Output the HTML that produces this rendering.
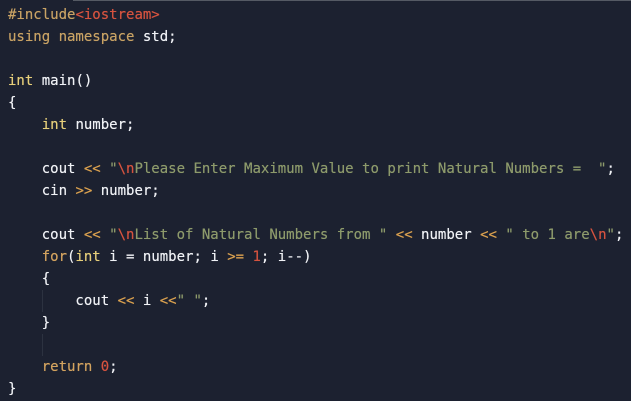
<!DOCTYPE html>
<html><head><meta charset="utf-8"><style>
html,body{margin:0;padding:0;background:#1c2130;width:631px;height:401px;overflow:hidden}
.top{position:absolute;left:73px;top:0;right:0;height:1px;background:#555a64}
pre{position:absolute;left:8px;top:4px;margin:0;font-family:"DejaVu Sans Mono","Liberation Mono",monospace;font-size:14px;line-height:22px;color:#f0f2f6;text-shadow:0 0 0.4px currentColor}
.k{color:#d3a35f}.y{color:#e6cf7a}.r{color:#d5533f}.s{color:#8d9a6b}.o{color:#d9a04f}.p{color:#c8a264}
.g{position:absolute;width:1px;background:#2c3240}
</style></head><body>
<div class="top"></div>
<div class="g" style="left:42px;top:290px;height:22px"></div>
<div class="g" style="left:42px;top:334px;height:22px"></div>
<pre><span class="p">#include</span><span class="r">&lt;iostream&gt;</span>
<span class="p">using namespace</span> std;

<span class="y">int</span> main()
{
    <span class="y">int</span> number;

    cout <span class="o">&lt;&lt;</span> <span class="s">"<span class="r">\n</span>Please Enter Maximum Value to print Natural Numbers =  "</span>;
    cin <span class="o">&gt;&gt;</span> number;

    cout <span class="o">&lt;&lt;</span> <span class="s">"<span class="r">\n</span>List of Natural Numbers from "</span> <span class="o">&lt;&lt;</span> number <span class="o">&lt;&lt;</span> <span class="s">" to 1 are<span class="r">\n</span>"</span>;
    <span class="k">for</span>(<span class="y">int</span> i = number; i <span class="o">&gt;=</span> <span class="r">1</span>; i--)
    {
        cout <span class="o">&lt;&lt;</span> i <span class="o">&lt;&lt;</span><span class="s">" "</span>;
    }

    <span class="k">return</span> <span class="r">0</span>;
}</pre>
</body></html>
